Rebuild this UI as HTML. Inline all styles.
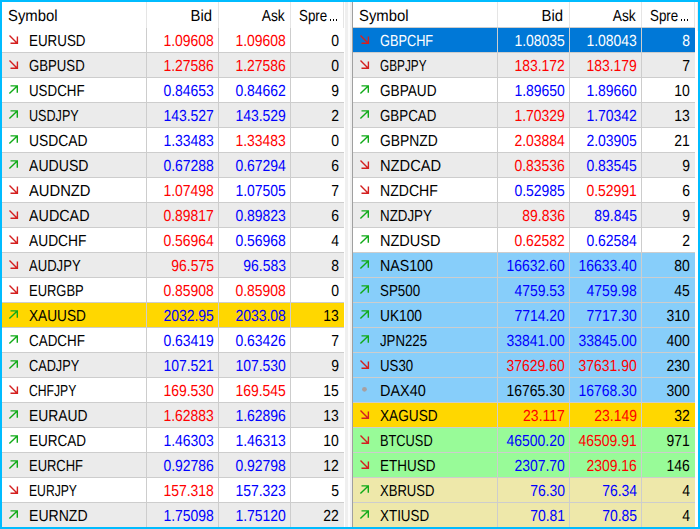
<!DOCTYPE html>
<html><head><meta charset="utf-8"><style>
html,body{margin:0;padding:0}
body{width:700px;height:529px;position:relative;overflow:hidden;background:#fff;font-family:"Liberation Sans",sans-serif}
div,svg{position:absolute}
.row{height:24px}
.gh{height:1px;background:#cdcdcd}
.gv{width:1px;top:28px;height:499px;background:#cdcdcd}
.hs{width:1px;top:2px;height:26px;background:#e5e5e5}
.t{font-size:16px;line-height:25px;white-space:nowrap;text-rendering:geometricPrecision}
.t span{display:inline-block;transform-origin:0 17.5px}
.r span{transform-origin:100% 17.5px}
.bd{background:#00bcff}
.dt{width:1px;height:2px;background:#000}
</style></head><body>
<div class="row" style="left:2px;top:28px;width:342px;background:#ffffff"></div>
<div class="row" style="left:2px;top:53px;width:342px;background:#ebebeb"></div>
<div class="row" style="left:2px;top:78px;width:342px;background:#ffffff"></div>
<div class="row" style="left:2px;top:103px;width:342px;background:#ebebeb"></div>
<div class="row" style="left:2px;top:128px;width:342px;background:#ffffff"></div>
<div class="row" style="left:2px;top:153px;width:342px;background:#ebebeb"></div>
<div class="row" style="left:2px;top:178px;width:342px;background:#ffffff"></div>
<div class="row" style="left:2px;top:203px;width:342px;background:#ebebeb"></div>
<div class="row" style="left:2px;top:228px;width:342px;background:#ffffff"></div>
<div class="row" style="left:2px;top:253px;width:342px;background:#ebebeb"></div>
<div class="row" style="left:2px;top:278px;width:342px;background:#ffffff"></div>
<div class="row" style="left:2px;top:303px;width:342px;background:#ffd700"></div>
<div class="row" style="left:2px;top:328px;width:342px;background:#ffffff"></div>
<div class="row" style="left:2px;top:353px;width:342px;background:#ebebeb"></div>
<div class="row" style="left:2px;top:378px;width:342px;background:#ffffff"></div>
<div class="row" style="left:2px;top:403px;width:342px;background:#ebebeb"></div>
<div class="row" style="left:2px;top:428px;width:342px;background:#ffffff"></div>
<div class="row" style="left:2px;top:453px;width:342px;background:#ebebeb"></div>
<div class="row" style="left:2px;top:478px;width:342px;background:#ffffff"></div>
<div class="row" style="left:2px;top:503px;width:342px;background:#ebebeb"></div>
<div class="gh" style="left:2px;top:52px;width:342px"></div>
<div class="gh" style="left:2px;top:77px;width:342px"></div>
<div class="gh" style="left:2px;top:102px;width:342px"></div>
<div class="gh" style="left:2px;top:127px;width:342px"></div>
<div class="gh" style="left:2px;top:152px;width:342px"></div>
<div class="gh" style="left:2px;top:177px;width:342px"></div>
<div class="gh" style="left:2px;top:202px;width:342px"></div>
<div class="gh" style="left:2px;top:227px;width:342px"></div>
<div class="gh" style="left:2px;top:252px;width:342px"></div>
<div class="gh" style="left:2px;top:277px;width:342px"></div>
<div class="gh" style="left:2px;top:302px;width:342px"></div>
<div class="gh" style="left:2px;top:327px;width:342px"></div>
<div class="gh" style="left:2px;top:352px;width:342px"></div>
<div class="gh" style="left:2px;top:377px;width:342px"></div>
<div class="gh" style="left:2px;top:402px;width:342px"></div>
<div class="gh" style="left:2px;top:427px;width:342px"></div>
<div class="gh" style="left:2px;top:452px;width:342px"></div>
<div class="gh" style="left:2px;top:477px;width:342px"></div>
<div class="gh" style="left:2px;top:502px;width:342px"></div>
<div class="gv" style="left:146px"></div>
<div class="gv" style="left:218px"></div>
<div class="gv" style="left:290px"></div>
<div class="hs" style="left:146px"></div>
<div class="hs" style="left:218px"></div>
<div class="hs" style="left:290px"></div>
<div class="hs" style="left:343px"></div>
<div class="t" style="left:8px;top:4px;color:#000"><span style="transform:scale(0.93,1)">Symbol</span></div>
<div class="t r" style="right:488px;top:4px;color:#000"><span style="transform:scale(0.93,1)">Bid</span></div>
<div class="t r" style="right:415px;top:4px;color:#000"><span style="transform:scale(0.862,1)">Ask</span></div>
<div class="t" style="left:299px;top:4px;color:#000"><span style="transform:scale(0.833,1)">Spre</span></div>
<div class="dt" style="left:330px;top:19px"></div>
<div class="dt" style="left:333px;top:19px"></div>
<div class="dt" style="left:336px;top:19px"></div>
<svg style="left:8px;top:34px" width="14" height="14" viewBox="0 0 14 14"><path d="M1.5 1.5 L9.2 9.2 M2.5 9.3 H9.4 V2.5" fill="none" stroke="#d42020" stroke-width="1.4"/></svg>
<div class="t" style="left:29px;top:29px;color:#000000"><span style="transform:scale(0.8364,1)">EURUSD</span></div>
<div class="t r" style="right:486px;top:29px;color:#ff0000"><span style="transform:scale(0.872,1)">1.09608</span></div>
<div class="t r" style="right:414px;top:29px;color:#ff0000"><span style="transform:scale(0.872,1)">1.09608</span></div>
<div class="t r" style="right:361px;top:29px;color:#000000"><span style="transform:scale(0.872,1)">0</span></div>
<svg style="left:8px;top:59px" width="14" height="14" viewBox="0 0 14 14"><path d="M1.5 1.5 L9.2 9.2 M2.5 9.3 H9.4 V2.5" fill="none" stroke="#d42020" stroke-width="1.4"/></svg>
<div class="t" style="left:29px;top:54px;color:#000000"><span style="transform:scale(0.8239,1)">GBPUSD</span></div>
<div class="t r" style="right:486px;top:54px;color:#ff0000"><span style="transform:scale(0.872,1)">1.27586</span></div>
<div class="t r" style="right:414px;top:54px;color:#ff0000"><span style="transform:scale(0.872,1)">1.27586</span></div>
<div class="t r" style="right:361px;top:54px;color:#000000"><span style="transform:scale(0.872,1)">0</span></div>
<svg style="left:8px;top:84px" width="14" height="14" viewBox="0 0 14 14"><path d="M1.4 9.6 L9.2 1.9 M2.5 1.9 H9.3 V8.8" fill="none" stroke="#10aa18" stroke-width="1.4"/></svg>
<div class="t" style="left:29px;top:79px;color:#000000"><span style="transform:scale(0.8328,1)">USDCHF</span></div>
<div class="t r" style="right:486px;top:79px;color:#0000ff"><span style="transform:scale(0.872,1)">0.84653</span></div>
<div class="t r" style="right:414px;top:79px;color:#0000ff"><span style="transform:scale(0.872,1)">0.84662</span></div>
<div class="t r" style="right:361px;top:79px;color:#000000"><span style="transform:scale(0.872,1)">9</span></div>
<svg style="left:8px;top:109px" width="14" height="14" viewBox="0 0 14 14"><path d="M1.4 9.6 L9.2 1.9 M2.5 1.9 H9.3 V8.8" fill="none" stroke="#10aa18" stroke-width="1.4"/></svg>
<div class="t" style="left:29px;top:104px;color:#000000"><span style="transform:scale(0.7873,1)">USDJPY</span></div>
<div class="t r" style="right:486px;top:104px;color:#0000ff"><span style="transform:scale(0.872,1)">143.527</span></div>
<div class="t r" style="right:414px;top:104px;color:#0000ff"><span style="transform:scale(0.872,1)">143.529</span></div>
<div class="t r" style="right:361px;top:104px;color:#000000"><span style="transform:scale(0.872,1)">2</span></div>
<svg style="left:8px;top:134px" width="14" height="14" viewBox="0 0 14 14"><path d="M1.4 9.6 L9.2 1.9 M2.5 1.9 H9.3 V8.8" fill="none" stroke="#10aa18" stroke-width="1.4"/></svg>
<div class="t" style="left:29px;top:129px;color:#000000"><span style="transform:scale(0.8672,1)">USDCAD</span></div>
<div class="t r" style="right:486px;top:129px;color:#0000ff"><span style="transform:scale(0.872,1)">1.33483</span></div>
<div class="t r" style="right:414px;top:129px;color:#ff0000"><span style="transform:scale(0.872,1)">1.33483</span></div>
<div class="t r" style="right:361px;top:129px;color:#000000"><span style="transform:scale(0.872,1)">0</span></div>
<svg style="left:8px;top:159px" width="14" height="14" viewBox="0 0 14 14"><path d="M1.4 9.6 L9.2 1.9 M2.5 1.9 H9.3 V8.8" fill="none" stroke="#10aa18" stroke-width="1.4"/></svg>
<div class="t" style="left:29px;top:154px;color:#000000"><span style="transform:scale(0.8806,1)">AUDUSD</span></div>
<div class="t r" style="right:486px;top:154px;color:#0000ff"><span style="transform:scale(0.872,1)">0.67288</span></div>
<div class="t r" style="right:414px;top:154px;color:#0000ff"><span style="transform:scale(0.872,1)">0.67294</span></div>
<div class="t r" style="right:361px;top:154px;color:#000000"><span style="transform:scale(0.872,1)">6</span></div>
<svg style="left:8px;top:184px" width="14" height="14" viewBox="0 0 14 14"><path d="M1.5 1.5 L9.2 9.2 M2.5 9.3 H9.4 V2.5" fill="none" stroke="#d42020" stroke-width="1.4"/></svg>
<div class="t" style="left:29px;top:179px;color:#000000"><span style="transform:scale(0.9227,1)">AUDNZD</span></div>
<div class="t r" style="right:486px;top:179px;color:#ff0000"><span style="transform:scale(0.872,1)">1.07498</span></div>
<div class="t r" style="right:414px;top:179px;color:#0000ff"><span style="transform:scale(0.872,1)">1.07505</span></div>
<div class="t r" style="right:361px;top:179px;color:#000000"><span style="transform:scale(0.872,1)">7</span></div>
<svg style="left:8px;top:209px" width="14" height="14" viewBox="0 0 14 14"><path d="M1.5 1.5 L9.2 9.2 M2.5 9.3 H9.4 V2.5" fill="none" stroke="#d42020" stroke-width="1.4"/></svg>
<div class="t" style="left:29px;top:204px;color:#000000"><span style="transform:scale(0.8955,1)">AUDCAD</span></div>
<div class="t r" style="right:486px;top:204px;color:#ff0000"><span style="transform:scale(0.872,1)">0.89817</span></div>
<div class="t r" style="right:414px;top:204px;color:#0000ff"><span style="transform:scale(0.872,1)">0.89823</span></div>
<div class="t r" style="right:361px;top:204px;color:#000000"><span style="transform:scale(0.872,1)">6</span></div>
<svg style="left:8px;top:234px" width="14" height="14" viewBox="0 0 14 14"><path d="M1.5 1.5 L9.2 9.2 M2.5 9.3 H9.4 V2.5" fill="none" stroke="#d42020" stroke-width="1.4"/></svg>
<div class="t" style="left:29px;top:229px;color:#000000"><span style="transform:scale(0.8612,1)">AUDCHF</span></div>
<div class="t r" style="right:486px;top:229px;color:#ff0000"><span style="transform:scale(0.872,1)">0.56964</span></div>
<div class="t r" style="right:414px;top:229px;color:#0000ff"><span style="transform:scale(0.872,1)">0.56968</span></div>
<div class="t r" style="right:361px;top:229px;color:#000000"><span style="transform:scale(0.872,1)">4</span></div>
<svg style="left:8px;top:259px" width="14" height="14" viewBox="0 0 14 14"><path d="M1.5 1.5 L9.2 9.2 M2.5 9.3 H9.4 V2.5" fill="none" stroke="#d42020" stroke-width="1.4"/></svg>
<div class="t" style="left:29px;top:254px;color:#000000"><span style="transform:scale(0.8175,1)">AUDJPY</span></div>
<div class="t r" style="right:486px;top:254px;color:#ff0000"><span style="transform:scale(0.872,1)">96.575</span></div>
<div class="t r" style="right:414px;top:254px;color:#0000ff"><span style="transform:scale(0.872,1)">96.583</span></div>
<div class="t r" style="right:361px;top:254px;color:#000000"><span style="transform:scale(0.872,1)">8</span></div>
<svg style="left:8px;top:284px" width="14" height="14" viewBox="0 0 14 14"><path d="M1.5 1.5 L9.2 9.2 M2.5 9.3 H9.4 V2.5" fill="none" stroke="#d42020" stroke-width="1.4"/></svg>
<div class="t" style="left:29px;top:279px;color:#000000"><span style="transform:scale(0.8091,1)">EURGBP</span></div>
<div class="t r" style="right:486px;top:279px;color:#ff0000"><span style="transform:scale(0.872,1)">0.85908</span></div>
<div class="t r" style="right:414px;top:279px;color:#ff0000"><span style="transform:scale(0.872,1)">0.85908</span></div>
<div class="t r" style="right:361px;top:279px;color:#000000"><span style="transform:scale(0.872,1)">0</span></div>
<svg style="left:8px;top:309px" width="14" height="14" viewBox="0 0 14 14"><path d="M1.4 9.6 L9.2 1.9 M2.5 1.9 H9.3 V8.8" fill="none" stroke="#10aa18" stroke-width="1.4"/></svg>
<div class="t" style="left:29px;top:304px;color:#000000"><span style="transform:scale(0.8522,1)">XAUUSD</span></div>
<div class="t r" style="right:486px;top:304px;color:#0000ff"><span style="transform:scale(0.872,1)">2032.95</span></div>
<div class="t r" style="right:414px;top:304px;color:#0000ff"><span style="transform:scale(0.872,1)">2033.08</span></div>
<div class="t r" style="right:361px;top:304px;color:#000000"><span style="transform:scale(0.872,1)">13</span></div>
<svg style="left:8px;top:334px" width="14" height="14" viewBox="0 0 14 14"><path d="M1.4 9.6 L9.2 1.9 M2.5 1.9 H9.3 V8.8" fill="none" stroke="#10aa18" stroke-width="1.4"/></svg>
<div class="t" style="left:29px;top:329px;color:#000000"><span style="transform:scale(0.8388,1)">CADCHF</span></div>
<div class="t r" style="right:486px;top:329px;color:#0000ff"><span style="transform:scale(0.872,1)">0.63419</span></div>
<div class="t r" style="right:414px;top:329px;color:#0000ff"><span style="transform:scale(0.872,1)">0.63426</span></div>
<div class="t r" style="right:361px;top:329px;color:#000000"><span style="transform:scale(0.872,1)">7</span></div>
<svg style="left:8px;top:359px" width="14" height="14" viewBox="0 0 14 14"><path d="M1.4 9.6 L9.2 1.9 M2.5 1.9 H9.3 V8.8" fill="none" stroke="#10aa18" stroke-width="1.4"/></svg>
<div class="t" style="left:29px;top:354px;color:#000000"><span style="transform:scale(0.7952,1)">CADJPY</span></div>
<div class="t r" style="right:486px;top:354px;color:#0000ff"><span style="transform:scale(0.872,1)">107.521</span></div>
<div class="t r" style="right:414px;top:354px;color:#0000ff"><span style="transform:scale(0.872,1)">107.530</span></div>
<div class="t r" style="right:361px;top:354px;color:#000000"><span style="transform:scale(0.872,1)">9</span></div>
<svg style="left:8px;top:384px" width="14" height="14" viewBox="0 0 14 14"><path d="M1.5 1.5 L9.2 9.2 M2.5 9.3 H9.4 V2.5" fill="none" stroke="#d42020" stroke-width="1.4"/></svg>
<div class="t" style="left:29px;top:379px;color:#000000"><span style="transform:scale(0.7597,1)">CHFJPY</span></div>
<div class="t r" style="right:486px;top:379px;color:#ff0000"><span style="transform:scale(0.872,1)">169.530</span></div>
<div class="t r" style="right:414px;top:379px;color:#ff0000"><span style="transform:scale(0.872,1)">169.545</span></div>
<div class="t r" style="right:361px;top:379px;color:#000000"><span style="transform:scale(0.872,1)">15</span></div>
<svg style="left:8px;top:409px" width="14" height="14" viewBox="0 0 14 14"><path d="M1.4 9.6 L9.2 1.9 M2.5 1.9 H9.3 V8.8" fill="none" stroke="#10aa18" stroke-width="1.4"/></svg>
<div class="t" style="left:29px;top:404px;color:#000000"><span style="transform:scale(0.8652,1)">EURAUD</span></div>
<div class="t r" style="right:486px;top:404px;color:#ff0000"><span style="transform:scale(0.872,1)">1.62883</span></div>
<div class="t r" style="right:414px;top:404px;color:#0000ff"><span style="transform:scale(0.872,1)">1.62896</span></div>
<div class="t r" style="right:361px;top:404px;color:#000000"><span style="transform:scale(0.872,1)">13</span></div>
<svg style="left:8px;top:434px" width="14" height="14" viewBox="0 0 14 14"><path d="M1.4 9.6 L9.2 1.9 M2.5 1.9 H9.3 V8.8" fill="none" stroke="#10aa18" stroke-width="1.4"/></svg>
<div class="t" style="left:29px;top:429px;color:#000000"><span style="transform:scale(0.8455,1)">EURCAD</span></div>
<div class="t r" style="right:486px;top:429px;color:#0000ff"><span style="transform:scale(0.872,1)">1.46303</span></div>
<div class="t r" style="right:414px;top:429px;color:#0000ff"><span style="transform:scale(0.872,1)">1.46313</span></div>
<div class="t r" style="right:361px;top:429px;color:#000000"><span style="transform:scale(0.872,1)">10</span></div>
<svg style="left:8px;top:459px" width="14" height="14" viewBox="0 0 14 14"><path d="M1.4 9.6 L9.2 1.9 M2.5 1.9 H9.3 V8.8" fill="none" stroke="#10aa18" stroke-width="1.4"/></svg>
<div class="t" style="left:29px;top:454px;color:#000000"><span style="transform:scale(0.8091,1)">EURCHF</span></div>
<div class="t r" style="right:486px;top:454px;color:#0000ff"><span style="transform:scale(0.872,1)">0.92786</span></div>
<div class="t r" style="right:414px;top:454px;color:#0000ff"><span style="transform:scale(0.872,1)">0.92798</span></div>
<div class="t r" style="right:361px;top:454px;color:#000000"><span style="transform:scale(0.872,1)">12</span></div>
<svg style="left:8px;top:484px" width="14" height="14" viewBox="0 0 14 14"><path d="M1.5 1.5 L9.2 9.2 M2.5 9.3 H9.4 V2.5" fill="none" stroke="#d42020" stroke-width="1.4"/></svg>
<div class="t" style="left:29px;top:479px;color:#000000"><span style="transform:scale(0.7597,1)">EURJPY</span></div>
<div class="t r" style="right:486px;top:479px;color:#ff0000"><span style="transform:scale(0.872,1)">157.318</span></div>
<div class="t r" style="right:414px;top:479px;color:#0000ff"><span style="transform:scale(0.872,1)">157.323</span></div>
<div class="t r" style="right:361px;top:479px;color:#000000"><span style="transform:scale(0.872,1)">5</span></div>
<svg style="left:8px;top:509px" width="14" height="14" viewBox="0 0 14 14"><path d="M1.4 9.6 L9.2 1.9 M2.5 1.9 H9.3 V8.8" fill="none" stroke="#10aa18" stroke-width="1.4"/></svg>
<div class="t" style="left:29px;top:504px;color:#000000"><span style="transform:scale(0.8785,1)">EURNZD</span></div>
<div class="t r" style="right:486px;top:504px;color:#0000ff"><span style="transform:scale(0.872,1)">1.75098</span></div>
<div class="t r" style="right:414px;top:504px;color:#0000ff"><span style="transform:scale(0.872,1)">1.75120</span></div>
<div class="t r" style="right:361px;top:504px;color:#000000"><span style="transform:scale(0.872,1)">22</span></div>
<div class="row" style="left:353px;top:28px;width:342px;background:#0078d7"></div>
<div class="row" style="left:353px;top:53px;width:342px;background:#ebebeb"></div>
<div class="row" style="left:353px;top:78px;width:342px;background:#ffffff"></div>
<div class="row" style="left:353px;top:103px;width:342px;background:#ebebeb"></div>
<div class="row" style="left:353px;top:128px;width:342px;background:#ffffff"></div>
<div class="row" style="left:353px;top:153px;width:342px;background:#ebebeb"></div>
<div class="row" style="left:353px;top:178px;width:342px;background:#ffffff"></div>
<div class="row" style="left:353px;top:203px;width:342px;background:#ebebeb"></div>
<div class="row" style="left:353px;top:228px;width:342px;background:#ffffff"></div>
<div class="row" style="left:353px;top:253px;width:342px;background:#87cefa"></div>
<div class="row" style="left:353px;top:278px;width:342px;background:#87cefa"></div>
<div class="row" style="left:353px;top:303px;width:342px;background:#87cefa"></div>
<div class="row" style="left:353px;top:328px;width:342px;background:#87cefa"></div>
<div class="row" style="left:353px;top:353px;width:342px;background:#87cefa"></div>
<div class="row" style="left:353px;top:378px;width:342px;background:#87cefa"></div>
<div class="row" style="left:353px;top:403px;width:342px;background:#ffd700"></div>
<div class="row" style="left:353px;top:428px;width:342px;background:#98fb98"></div>
<div class="row" style="left:353px;top:453px;width:342px;background:#98fb98"></div>
<div class="row" style="left:353px;top:478px;width:342px;background:#eee8aa"></div>
<div class="row" style="left:353px;top:503px;width:342px;background:#eee8aa"></div>
<div class="gh" style="left:353px;top:52px;width:342px"></div>
<div class="gh" style="left:353px;top:77px;width:342px"></div>
<div class="gh" style="left:353px;top:102px;width:342px"></div>
<div class="gh" style="left:353px;top:127px;width:342px"></div>
<div class="gh" style="left:353px;top:152px;width:342px"></div>
<div class="gh" style="left:353px;top:177px;width:342px"></div>
<div class="gh" style="left:353px;top:202px;width:342px"></div>
<div class="gh" style="left:353px;top:227px;width:342px"></div>
<div class="gh" style="left:353px;top:252px;width:342px"></div>
<div class="gh" style="left:353px;top:277px;width:342px"></div>
<div class="gh" style="left:353px;top:302px;width:342px"></div>
<div class="gh" style="left:353px;top:327px;width:342px"></div>
<div class="gh" style="left:353px;top:352px;width:342px"></div>
<div class="gh" style="left:353px;top:377px;width:342px"></div>
<div class="gh" style="left:353px;top:402px;width:342px"></div>
<div class="gh" style="left:353px;top:427px;width:342px"></div>
<div class="gh" style="left:353px;top:452px;width:342px"></div>
<div class="gh" style="left:353px;top:477px;width:342px"></div>
<div class="gh" style="left:353px;top:502px;width:342px"></div>
<div class="gv" style="left:497px"></div>
<div class="gv" style="left:569px"></div>
<div class="gv" style="left:641px"></div>
<div class="hs" style="left:497px"></div>
<div class="hs" style="left:569px"></div>
<div class="hs" style="left:641px"></div>
<div class="hs" style="left:694px"></div>
<div class="t" style="left:359px;top:4px;color:#000"><span style="transform:scale(0.93,1)">Symbol</span></div>
<div class="t r" style="right:137px;top:4px;color:#000"><span style="transform:scale(0.93,1)">Bid</span></div>
<div class="t r" style="right:64px;top:4px;color:#000"><span style="transform:scale(0.862,1)">Ask</span></div>
<div class="t" style="left:650px;top:4px;color:#000"><span style="transform:scale(0.833,1)">Spre</span></div>
<div class="dt" style="left:681px;top:19px"></div>
<div class="dt" style="left:684px;top:19px"></div>
<div class="dt" style="left:687px;top:19px"></div>
<svg style="left:359px;top:34px" width="14" height="14" viewBox="0 0 14 14"><path d="M1.5 1.5 L9.2 9.2 M2.5 9.3 H9.4 V2.5" fill="none" stroke="#d42020" stroke-width="1.4"/></svg>
<div class="t" style="left:380px;top:29px;color:#ffffff"><span style="transform:scale(0.797,1)">GBPCHF</span></div>
<div class="t r" style="right:135px;top:29px;color:#ffffff"><span style="transform:scale(0.872,1)">1.08035</span></div>
<div class="t r" style="right:63px;top:29px;color:#ffffff"><span style="transform:scale(0.872,1)">1.08043</span></div>
<div class="t r" style="right:10px;top:29px;color:#ffffff"><span style="transform:scale(0.872,1)">8</span></div>
<svg style="left:359px;top:59px" width="14" height="14" viewBox="0 0 14 14"><path d="M1.5 1.5 L9.2 9.2 M2.5 9.3 H9.4 V2.5" fill="none" stroke="#d42020" stroke-width="1.4"/></svg>
<div class="t" style="left:380px;top:54px;color:#000000"><span style="transform:scale(0.7365,1)">GBPJPY</span></div>
<div class="t r" style="right:135px;top:54px;color:#ff0000"><span style="transform:scale(0.872,1)">183.172</span></div>
<div class="t r" style="right:63px;top:54px;color:#ff0000"><span style="transform:scale(0.872,1)">183.179</span></div>
<div class="t r" style="right:10px;top:54px;color:#000000"><span style="transform:scale(0.872,1)">7</span></div>
<svg style="left:359px;top:84px" width="14" height="14" viewBox="0 0 14 14"><path d="M1.4 9.6 L9.2 1.9 M2.5 1.9 H9.3 V8.8" fill="none" stroke="#10aa18" stroke-width="1.4"/></svg>
<div class="t" style="left:380px;top:79px;color:#000000"><span style="transform:scale(0.8515,1)">GBPAUD</span></div>
<div class="t r" style="right:135px;top:79px;color:#0000ff"><span style="transform:scale(0.872,1)">1.89650</span></div>
<div class="t r" style="right:63px;top:79px;color:#0000ff"><span style="transform:scale(0.872,1)">1.89660</span></div>
<div class="t r" style="right:10px;top:79px;color:#000000"><span style="transform:scale(0.872,1)">10</span></div>
<svg style="left:359px;top:109px" width="14" height="14" viewBox="0 0 14 14"><path d="M1.4 9.6 L9.2 1.9 M2.5 1.9 H9.3 V8.8" fill="none" stroke="#10aa18" stroke-width="1.4"/></svg>
<div class="t" style="left:380px;top:104px;color:#000000"><span style="transform:scale(0.8328,1)">GBPCAD</span></div>
<div class="t r" style="right:135px;top:104px;color:#ff0000"><span style="transform:scale(0.872,1)">1.70329</span></div>
<div class="t r" style="right:63px;top:104px;color:#0000ff"><span style="transform:scale(0.872,1)">1.70342</span></div>
<div class="t r" style="right:10px;top:104px;color:#000000"><span style="transform:scale(0.872,1)">13</span></div>
<svg style="left:359px;top:134px" width="14" height="14" viewBox="0 0 14 14"><path d="M1.4 9.6 L9.2 1.9 M2.5 1.9 H9.3 V8.8" fill="none" stroke="#10aa18" stroke-width="1.4"/></svg>
<div class="t" style="left:380px;top:129px;color:#000000"><span style="transform:scale(0.8652,1)">GBPNZD</span></div>
<div class="t r" style="right:135px;top:129px;color:#ff0000"><span style="transform:scale(0.872,1)">2.03884</span></div>
<div class="t r" style="right:63px;top:129px;color:#0000ff"><span style="transform:scale(0.872,1)">2.03905</span></div>
<div class="t r" style="right:10px;top:129px;color:#000000"><span style="transform:scale(0.872,1)">21</span></div>
<svg style="left:359px;top:159px" width="14" height="14" viewBox="0 0 14 14"><path d="M1.5 1.5 L9.2 9.2 M2.5 9.3 H9.4 V2.5" fill="none" stroke="#d42020" stroke-width="1.4"/></svg>
<div class="t" style="left:380px;top:154px;color:#000000"><span style="transform:scale(0.9169,1)">NZDCAD</span></div>
<div class="t r" style="right:135px;top:154px;color:#ff0000"><span style="transform:scale(0.872,1)">0.83536</span></div>
<div class="t r" style="right:63px;top:154px;color:#0000ff"><span style="transform:scale(0.872,1)">0.83545</span></div>
<div class="t r" style="right:10px;top:154px;color:#000000"><span style="transform:scale(0.872,1)">9</span></div>
<svg style="left:359px;top:184px" width="14" height="14" viewBox="0 0 14 14"><path d="M1.5 1.5 L9.2 9.2 M2.5 9.3 H9.4 V2.5" fill="none" stroke="#d42020" stroke-width="1.4"/></svg>
<div class="t" style="left:380px;top:179px;color:#000000"><span style="transform:scale(0.8785,1)">NZDCHF</span></div>
<div class="t r" style="right:135px;top:179px;color:#0000ff"><span style="transform:scale(0.872,1)">0.52985</span></div>
<div class="t r" style="right:63px;top:179px;color:#ff0000"><span style="transform:scale(0.872,1)">0.52991</span></div>
<div class="t r" style="right:10px;top:179px;color:#000000"><span style="transform:scale(0.872,1)">6</span></div>
<svg style="left:359px;top:209px" width="14" height="14" viewBox="0 0 14 14"><path d="M1.4 9.6 L9.2 1.9 M2.5 1.9 H9.3 V8.8" fill="none" stroke="#10aa18" stroke-width="1.4"/></svg>
<div class="t" style="left:380px;top:204px;color:#000000"><span style="transform:scale(0.8344,1)">NZDJPY</span></div>
<div class="t r" style="right:135px;top:204px;color:#ff0000"><span style="transform:scale(0.872,1)">89.836</span></div>
<div class="t r" style="right:63px;top:204px;color:#0000ff"><span style="transform:scale(0.872,1)">89.845</span></div>
<div class="t r" style="right:10px;top:204px;color:#000000"><span style="transform:scale(0.872,1)">9</span></div>
<svg style="left:359px;top:234px" width="14" height="14" viewBox="0 0 14 14"><path d="M1.4 9.6 L9.2 1.9 M2.5 1.9 H9.3 V8.8" fill="none" stroke="#10aa18" stroke-width="1.4"/></svg>
<div class="t" style="left:380px;top:229px;color:#000000"><span style="transform:scale(0.9077,1)">NZDUSD</span></div>
<div class="t r" style="right:135px;top:229px;color:#ff0000"><span style="transform:scale(0.872,1)">0.62582</span></div>
<div class="t r" style="right:63px;top:229px;color:#0000ff"><span style="transform:scale(0.872,1)">0.62584</span></div>
<div class="t r" style="right:10px;top:229px;color:#000000"><span style="transform:scale(0.872,1)">2</span></div>
<svg style="left:359px;top:259px" width="14" height="14" viewBox="0 0 14 14"><path d="M1.4 9.6 L9.2 1.9 M2.5 1.9 H9.3 V8.8" fill="none" stroke="#10aa18" stroke-width="1.4"/></svg>
<div class="t" style="left:380px;top:254px;color:#000000"><span style="transform:scale(0.8881,1)">NAS100</span></div>
<div class="t r" style="right:135px;top:254px;color:#0000ff"><span style="transform:scale(0.872,1)">16632.60</span></div>
<div class="t r" style="right:63px;top:254px;color:#0000ff"><span style="transform:scale(0.872,1)">16633.40</span></div>
<div class="t r" style="right:10px;top:254px;color:#000000"><span style="transform:scale(0.872,1)">80</span></div>
<svg style="left:359px;top:284px" width="14" height="14" viewBox="0 0 14 14"><path d="M1.4 9.6 L9.2 1.9 M2.5 1.9 H9.3 V8.8" fill="none" stroke="#10aa18" stroke-width="1.4"/></svg>
<div class="t" style="left:380px;top:279px;color:#000000"><span style="transform:scale(0.834,1)">SP500</span></div>
<div class="t r" style="right:135px;top:279px;color:#0000ff"><span style="transform:scale(0.872,1)">4759.53</span></div>
<div class="t r" style="right:63px;top:279px;color:#0000ff"><span style="transform:scale(0.872,1)">4759.98</span></div>
<div class="t r" style="right:10px;top:279px;color:#000000"><span style="transform:scale(0.872,1)">45</span></div>
<svg style="left:359px;top:309px" width="14" height="14" viewBox="0 0 14 14"><path d="M1.4 9.6 L9.2 1.9 M2.5 1.9 H9.3 V8.8" fill="none" stroke="#10aa18" stroke-width="1.4"/></svg>
<div class="t" style="left:380px;top:304px;color:#000000"><span style="transform:scale(0.8571,1)">UK100</span></div>
<div class="t r" style="right:135px;top:304px;color:#0000ff"><span style="transform:scale(0.872,1)">7714.20</span></div>
<div class="t r" style="right:63px;top:304px;color:#0000ff"><span style="transform:scale(0.872,1)">7717.30</span></div>
<div class="t r" style="right:10px;top:304px;color:#000000"><span style="transform:scale(0.872,1)">310</span></div>
<svg style="left:359px;top:334px" width="14" height="14" viewBox="0 0 14 14"><path d="M1.4 9.6 L9.2 1.9 M2.5 1.9 H9.3 V8.8" fill="none" stroke="#10aa18" stroke-width="1.4"/></svg>
<div class="t" style="left:380px;top:329px;color:#000000"><span style="transform:scale(0.8263,1)">JPN225</span></div>
<div class="t r" style="right:135px;top:329px;color:#0000ff"><span style="transform:scale(0.872,1)">33841.00</span></div>
<div class="t r" style="right:63px;top:329px;color:#0000ff"><span style="transform:scale(0.872,1)">33845.00</span></div>
<div class="t r" style="right:10px;top:329px;color:#000000"><span style="transform:scale(0.872,1)">400</span></div>
<svg style="left:359px;top:359px" width="14" height="14" viewBox="0 0 14 14"><path d="M1.5 1.5 L9.2 9.2 M2.5 9.3 H9.4 V2.5" fill="none" stroke="#d42020" stroke-width="1.4"/></svg>
<div class="t" style="left:380px;top:354px;color:#000000"><span style="transform:scale(0.8275,1)">US30</span></div>
<div class="t r" style="right:135px;top:354px;color:#ff0000"><span style="transform:scale(0.872,1)">37629.60</span></div>
<div class="t r" style="right:63px;top:354px;color:#ff0000"><span style="transform:scale(0.872,1)">37631.90</span></div>
<div class="t r" style="right:10px;top:354px;color:#000000"><span style="transform:scale(0.872,1)">230</span></div>
<svg style="left:359px;top:384px" width="14" height="14" viewBox="0 0 14 14"><circle cx="5.45" cy="5.3" r="2.4" fill="#a8a0a0"/></svg>
<div class="t" style="left:380px;top:379px;color:#000000"><span style="transform:scale(0.904,1)">DAX40</span></div>
<div class="t r" style="right:135px;top:379px;color:#000000"><span style="transform:scale(0.872,1)">16765.30</span></div>
<div class="t r" style="right:63px;top:379px;color:#0000ff"><span style="transform:scale(0.872,1)">16768.30</span></div>
<div class="t r" style="right:10px;top:379px;color:#000000"><span style="transform:scale(0.872,1)">300</span></div>
<svg style="left:359px;top:409px" width="14" height="14" viewBox="0 0 14 14"><path d="M1.5 1.5 L9.2 9.2 M2.5 9.3 H9.4 V2.5" fill="none" stroke="#d42020" stroke-width="1.4"/></svg>
<div class="t" style="left:380px;top:404px;color:#000000"><span style="transform:scale(0.8522,1)">XAGUSD</span></div>
<div class="t r" style="right:135px;top:404px;color:#ff0000"><span style="transform:scale(0.872,1)">23.117</span></div>
<div class="t r" style="right:63px;top:404px;color:#ff0000"><span style="transform:scale(0.872,1)">23.149</span></div>
<div class="t r" style="right:10px;top:404px;color:#000000"><span style="transform:scale(0.872,1)">32</span></div>
<svg style="left:359px;top:434px" width="14" height="14" viewBox="0 0 14 14"><path d="M1.5 1.5 L9.2 9.2 M2.5 9.3 H9.4 V2.5" fill="none" stroke="#d42020" stroke-width="1.4"/></svg>
<div class="t" style="left:380px;top:429px;color:#000000"><span style="transform:scale(0.8,1)">BTCUSD</span></div>
<div class="t r" style="right:135px;top:429px;color:#0000ff"><span style="transform:scale(0.872,1)">46500.20</span></div>
<div class="t r" style="right:63px;top:429px;color:#ff0000"><span style="transform:scale(0.872,1)">46509.91</span></div>
<div class="t r" style="right:10px;top:429px;color:#000000"><span style="transform:scale(0.872,1)">971</span></div>
<svg style="left:359px;top:459px" width="14" height="14" viewBox="0 0 14 14"><path d="M1.5 1.5 L9.2 9.2 M2.5 9.3 H9.4 V2.5" fill="none" stroke="#d42020" stroke-width="1.4"/></svg>
<div class="t" style="left:380px;top:454px;color:#000000"><span style="transform:scale(0.8415,1)">ETHUSD</span></div>
<div class="t r" style="right:135px;top:454px;color:#0000ff"><span style="transform:scale(0.872,1)">2307.70</span></div>
<div class="t r" style="right:63px;top:454px;color:#ff0000"><span style="transform:scale(0.872,1)">2309.16</span></div>
<div class="t r" style="right:10px;top:454px;color:#000000"><span style="transform:scale(0.872,1)">146</span></div>
<svg style="left:359px;top:484px" width="14" height="14" viewBox="0 0 14 14"><path d="M1.4 9.6 L9.2 1.9 M2.5 1.9 H9.3 V8.8" fill="none" stroke="#10aa18" stroke-width="1.4"/></svg>
<div class="t" style="left:380px;top:479px;color:#000000"><span style="transform:scale(0.8164,1)">XBRUSD</span></div>
<div class="t r" style="right:135px;top:479px;color:#0000ff"><span style="transform:scale(0.872,1)">76.30</span></div>
<div class="t r" style="right:63px;top:479px;color:#0000ff"><span style="transform:scale(0.872,1)">76.34</span></div>
<div class="t r" style="right:10px;top:479px;color:#000000"><span style="transform:scale(0.872,1)">4</span></div>
<svg style="left:359px;top:509px" width="14" height="14" viewBox="0 0 14 14"><path d="M1.4 9.6 L9.2 1.9 M2.5 1.9 H9.3 V8.8" fill="none" stroke="#10aa18" stroke-width="1.4"/></svg>
<div class="t" style="left:380px;top:504px;color:#000000"><span style="transform:scale(0.8379,1)">XTIUSD</span></div>
<div class="t r" style="right:135px;top:504px;color:#0000ff"><span style="transform:scale(0.872,1)">70.81</span></div>
<div class="t r" style="right:63px;top:504px;color:#0000ff"><span style="transform:scale(0.872,1)">70.85</span></div>
<div class="t r" style="right:10px;top:504px;color:#000000"><span style="transform:scale(0.872,1)">4</span></div>
<div class="gh" style="left:353px;top:27px;width:342px"></div>
<div style="left:697px;top:2px;width:1px;height:29px;background:#f4eeee"></div>
<div style="left:344px;top:2px;width:8px;height:525px;background:#efefef"></div>
<div style="left:344px;top:2px;width:1px;height:525px;background:#ffffff"></div>
<div style="left:348px;top:2px;width:2px;height:525px;background:#fcfcfc"></div>
<div style="left:352px;top:2px;width:1px;height:525px;background:#a0a0a0"></div>
<div class="bd" style="left:0;top:0;width:700px;height:2px"></div>
<div class="bd" style="left:0;top:527px;width:700px;height:2px"></div>
<div class="bd" style="left:0;top:0;width:2px;height:529px"></div>
<div class="bd" style="left:698px;top:0;width:2px;height:529px"></div>
</body></html>
